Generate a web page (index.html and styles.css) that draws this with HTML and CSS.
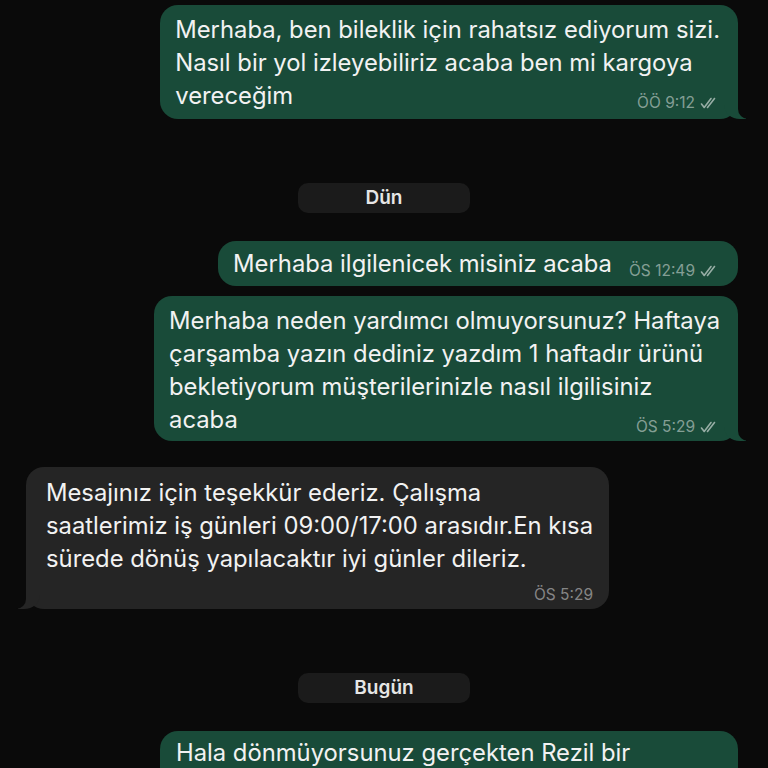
FILE: index.html
```html
<!DOCTYPE html>
<html lang="tr">
<head>
	<meta charset="utf-8">
	<title>Sohbet</title>
	<link rel="stylesheet" href="styles.css">
</head>
<body>
<div class="chat">

	<div class="bubble out tail">
		<div class="line">Merhaba, ben bileklik için rahatsız ediyorum sizi.</div>
		<div class="line">Nasıl bir yol izleyebiliriz acaba ben mi kargoya</div>
		<div class="last">
			<span>vereceğim</span>
			<span class="meta">ÖÖ 9:12 <svg class="ticks" viewBox="0 0 20 12"><path d="M1.5 7 L4.2 10.5 L11 1.5 M7.5 10.5 L14.5 1.5"/></svg></span>
		</div>
	</div>

	<div class="day">Dün</div>

	<div class="bubble out single">
		<div class="last">
			<span>Merhaba ilgilenicek misiniz acaba</span>
			<span class="meta">ÖS 12:49 <svg class="ticks" viewBox="0 0 20 12"><path d="M1.5 7 L4.2 10.5 L11 1.5 M7.5 10.5 L14.5 1.5"/></svg></span>
		</div>
	</div>

	<div class="bubble out tail next">
		<div class="line">Merhaba neden yardımcı olmuyorsunuz? Haftaya</div>
		<div class="line">çarşamba yazın dediniz yazdım 1 haftadır ürünü</div>
		<div class="line">bekletiyorum müşterilerinizle nasıl ilgilisiniz</div>
		<div class="last">
			<span>acaba</span>
			<span class="meta">ÖS 5:29 <svg class="ticks" viewBox="0 0 20 12"><path d="M1.5 7 L4.2 10.5 L11 1.5 M7.5 10.5 L14.5 1.5"/></svg></span>
		</div>
	</div>

	<div class="bubble in tail">
		<div class="line">Mesajınız için teşekkür ederiz. Çalışma</div>
		<div class="line">saatlerimiz iş günleri 09:00/17:00 arasıdır.En kısa</div>
		<div class="line">sürede dönüş yapılacaktır iyi günler dileriz.</div>
		<div class="foot"><span class="meta">ÖS 5:29</span></div>
	</div>

	<div class="day">Bugün</div>

	<div class="bubble out open">
		<div class="line">Hala dönmüyorsunuz gerçekten Rezil bir</div>
	</div>

</div>
</body>
</html>
```

FILE: styles.css
```css
	html, body {
		margin: 0;
		background-color: #0a0a0a;
		overflow: hidden;
	}
	body {
		font-family: Inter, "Noto Sans", sans-serif;
		color: #f2f2f2;
		width: 768px;
		height: 768px;
	}
	.chat {
		display: flex;
		flex-direction: column;
		padding: 5px 30px 0 26px;
	}
	.bubble {
		position: relative;
		border-radius: 18px;
		font-size: 23.8px;
		line-height: 33px;
		white-space: nowrap;
	}
	.bubble.out {
		align-self: flex-end;
		background-color: #194b39;
		padding: 8px 18px 7px 15px;
	}
	.bubble.single {
		padding-top: 6px;
		padding-bottom: 6px;
	}
	.bubble.in {
		align-self: flex-start;
		background-color: #252525;
		padding: 9px 16px 3px 20px;
		margin-top: 26px;
	}
	.bubble.next {
		margin-top: 10px;
		padding-bottom: 5px;
	}
	.bubble.open {
		width: 545px;
		height: 80px;
		padding: 5px 17px 0 16px;
	}
	.last {
		display: flex;
		justify-content: space-between;
		align-items: flex-end;
		gap: 17px;
	}
	.foot {
		display: flex;
		justify-content: flex-end;
		padding-top: 9px;
		line-height: 22px;
	}
	.meta {
		font-size: 15.5px;
		line-height: 22px;
		color: rgba(255,255,255,0.48);
		white-space: nowrap;
		display: inline-flex;
		align-items: center;
		gap: 5px;
		position: relative;
		top: 2px;
	}
	.bubble.in .meta {
		color: rgba(255,255,255,0.45);
		top: 0;
	}
	.ticks {
		width: 20px;
		height: 12px;
		fill: none;
		stroke: rgba(255,255,255,0.55);
		stroke-width: 1.6;
		stroke-linecap: round;
		stroke-linejoin: round;
	}

	/* bubble tails */
	.tail.out::before, .tail.out::after,
	.tail.in::before, .tail.in::after {
		content: "";
		position: absolute;
		bottom: 0;
		height: 18px;
	}
	.tail.out::before {
		right: -8px;
		width: 22px;
		background-color: #194b39;
		border-bottom-left-radius: 16px 14px;
	}
	.tail.out::after {
		right: -12px;
		width: 12px;
		background-color: #0a0a0a;
		border-bottom-left-radius: 10px;
	}
	.tail.in::before {
		left: -8px;
		width: 22px;
		background-color: #252525;
		border-bottom-right-radius: 16px 14px;
	}
	.tail.in::after {
		left: -12px;
		width: 12px;
		background-color: #0a0a0a;
		border-bottom-right-radius: 10px;
	}

	.day {
		align-self: center;
		width: 172px;
		height: 30px;
		line-height: 30px;
		text-align: center;
		background-color: #1b1b1b;
		border-radius: 10px;
		font-size: 19px;
		font-weight: 600;
		color: #e6e6e6;
		margin: 64px 0 28px;
		position: relative;
		left: 2px;
	}
```
